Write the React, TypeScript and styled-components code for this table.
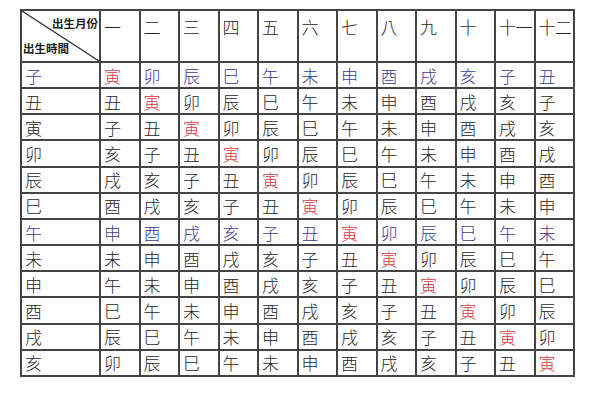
import React from 'react';
import styled, { createGlobalStyle, css } from 'styled-components';

const GlobalStyle = createGlobalStyle`
  html, body {
    margin: 0;
    padding: 0;
    background: #ffffff;
  }
  body {
    font-family: 'Noto Sans CJK TC', 'Noto Sans CJK SC', sans-serif;
  }
`;

const BRANCHES = ['子', '丑', '寅', '卯', '辰', '巳', '午', '未', '申', '酉', '戌', '亥'];
const MONTHS = ['一', '二', '三', '四', '五', '六', '七', '八', '九', '十', '十一', '十二'];
const HIGHLIGHT_ROWS = [0, 6];

const Page = styled.div`
  padding: 9px 0 0 20px;
`;

const Grid = styled.div`
  display: grid;
  grid-template-columns: 79px repeat(12, 1fr);
  grid-template-rows: 52px repeat(12, 1fr);
  width: 555px;
  height: 368px;
  box-sizing: border-box;
  border-top: 2px solid #444;
  border-left: 2px solid #444;
`;

type Tone = 'plain' | 'blue' | 'red';

const toneColor: Record<Tone, string> = {
  plain: '#262626',
  blue: '#3b3b96',
  red: '#d8383e',
};

const Cell = styled.div<{ $tone?: Tone; $head?: boolean }>`
  box-sizing: border-box;
  border-right: 2px solid #444;
  border-bottom: 2px solid #444;
  padding-left: 3px;
  display: flex;
  align-items: center;
  font-size: 17px;
  font-weight: 300;
  line-height: 1;
  color: ${p => toneColor[p.$tone || 'plain']};
  white-space: nowrap;
  overflow: hidden;
  letter-spacing: -0.5px;
  ${p =>
    p.$head &&
    css`
      align-items: flex-start;
      padding-top: 7px;
    `}
`;

const CornerCell = styled.div`
  position: relative;
  box-sizing: border-box;
  border-right: 2px solid #444;
  border-bottom: 2px solid #444;
  color: #1e1e1e;
  font-size: 11.5px;
  font-weight: bold;
  line-height: 1;
`;

const CornerTop = styled.span`
  position: absolute;
  right: 1px;
  top: 7px;
`;

const CornerBottom = styled.span`
  position: absolute;
  left: 1px;
  bottom: 7px;
`;

const Diagonal = styled.svg`
  position: absolute;
  inset: 0;
  width: 100%;
  height: 100%;
`;

export default function App() {
  return (
    <>
      <GlobalStyle />
      <Page>
        <Grid>
          <CornerCell>
            <Diagonal viewBox="0 0 77 50" preserveAspectRatio="none">
              <line x1="0" y1="0" x2="77" y2="50" stroke="#333" strokeWidth="1.3" />
            </Diagonal>
            <CornerTop>出生月份</CornerTop>
            <CornerBottom>出生時間</CornerBottom>
          </CornerCell>
          {MONTHS.map(m => (
            <Cell key={m} $head>
              {m}
            </Cell>
          ))}
          {BRANCHES.map((hour, i) => {
            const rowTone: Tone = HIGHLIGHT_ROWS.includes(i) ? 'blue' : 'plain';
            return (
              <React.Fragment key={hour}>
                <Cell $tone={rowTone}>{hour}</Cell>
                {MONTHS.map((m, j) => {
                  const value = BRANCHES[(2 + j - i + 12) % 12];
                  return (
                    <Cell key={m} $tone={value === '寅' ? 'red' : rowTone}>
                      {value}
                    </Cell>
                  );
                })}
              </React.Fragment>
            );
          })}
        </Grid>
      </Page>
    </>
  );
}
